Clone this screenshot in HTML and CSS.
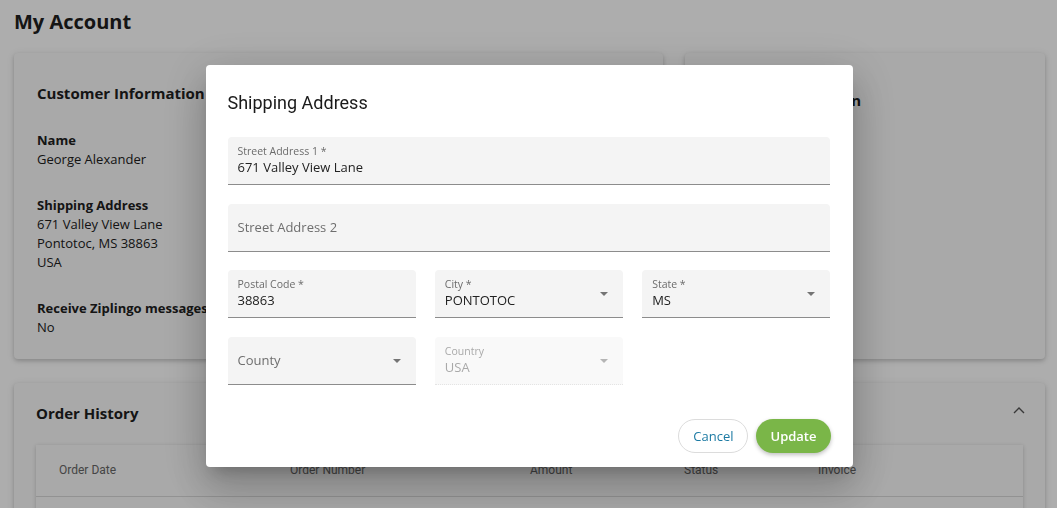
FILE: index.html
```html
<!DOCTYPE html>
<html lang="en">
<head>
    <meta charset="UTF-8">
    <meta name="viewport" content="width=device-width, initial-scale=1.0">
    <title>My Account</title>
    <link rel="stylesheet" href="styles.css">
</head>
<body>

    <div class="page">
        <h1 class="page-title">My Account</h1>

        <div class="info-row">
            <div class="card">
                <h2 class="card-title">Customer Information</h2>
                <div class="info-block">
                    <div class="info-label">Name</div>
                    <div>George Alexander</div>
                </div>
                <div class="info-block">
                    <div class="info-label">Shipping Address</div>
                    <div>671 Valley View Lane</div>
                    <div>Pontotoc, MS 38863</div>
                    <div>USA</div>
                </div>
                <div class="info-block">
                    <div class="info-label">Receive Ziplingo messages</div>
                    <div>No</div>
                </div>
            </div>
            <div class="card card-right">
                <h2 class="card-title">Contact Information</h2>
            </div>
        </div>

        <div class="card history">
            <div class="history-head">
                <h2 class="card-title">Order History</h2>
                <svg class="chevron" width="12" height="8" viewBox="0 0 12 8">
                    <path d="M1 7 L6 2 L11 7" fill="none" stroke="currentColor" stroke-width="1.4"/>
                </svg>
            </div>
            <div class="orders">
                <div class="orders-head">
                    <div>Order Date</div>
                    <div>Order Number</div>
                    <div>Amount</div>
                    <div>Status</div>
                    <div>Invoice</div>
                </div>
                <div class="orders-row"></div>
            </div>
        </div>
    </div>

    <!-- dialog over the page -->
    <div class="overlay">
        <div class="dialog">
            <h2 class="dialog-title">Shipping Address</h2>

            <div class="form">
                <div class="field wide">
                    <span class="field-label">Street Address 1 *</span>
                    <span class="field-value">671 Valley View Lane</span>
                </div>
                <div class="field wide empty">
                    <span class="field-placeholder">Street Address 2</span>
                </div>

                <div class="field">
                    <span class="field-label">Postal Code *</span>
                    <span class="field-value">38863</span>
                </div>
                <div class="field select">
                    <span class="field-label">City *</span>
                    <span class="field-value">PONTOTOC</span>
                    <span class="arrow"></span>
                </div>
                <div class="field select">
                    <span class="field-label">State *</span>
                    <span class="field-value">MS</span>
                    <span class="arrow"></span>
                </div>

                <div class="field select empty">
                    <span class="field-placeholder">County</span>
                    <span class="arrow"></span>
                </div>
                <div class="field select disabled">
                    <span class="field-label">Country</span>
                    <span class="field-value">USA</span>
                    <span class="arrow"></span>
                </div>
            </div>

            <div class="actions">
                <button class="btn btn-cancel">Cancel</button>
                <button class="btn btn-update">Update</button>
            </div>
        </div>
    </div>

</body>
</html>
```

FILE: styles.css
```css
body {
    font-family: 'Open Sans', 'Liberation Sans', sans-serif;
    margin: 0;
    padding: 0;
    background-color: #ffffff;
    color: #202020;
    font-size: 13px;
    overflow: hidden;
}
.page {
    padding: 9px 12px 0 14px;
}
.page-title {
    font-size: 20px;
    line-height: 26px;
    font-weight: 700;
    margin: 0 0 18px;
}
.info-row {
    display: grid;
    grid-template-columns: 649px 1fr;
    gap: 22px;
}
.card {
    background: #f9f9f9;
    border-radius: 4px;
    box-shadow: 0 2px 4px rgba(0, 0, 0, 0.18), 0 1px 8px rgba(0, 0, 0, 0.08);
    padding: 30px 23px 22px;
    line-height: 19px;
}
.card-right {
    padding-top: 37px;
}
.card-title {
    font-size: 15px;
    line-height: 20px;
    font-weight: 700;
    margin: 0 0 28px;
}
.info-block {
    margin-bottom: 27px;
}
.info-block:last-child {
    margin-bottom: 0;
}
.info-label {
    font-weight: 700;
}

.history {
    margin-top: 24px;
    padding: 20px 22px 0;
}
.history-head {
    display: flex;
    justify-content: space-between;
    align-items: center;
}
.history-head .card-title {
    margin: 0;
}
.chevron {
    color: #555;
    margin-right: -2px;
    margin-top: -6px;
}
.orders {
    margin-top: 22px;
    background: #f9f9f9;
    box-shadow: 0 1px 4px rgba(0, 0, 0, 0.2);
}
.orders-head {
    display: grid;
    grid-template-columns: 231px 240px 154px 134px 1fr;
    padding: 0 23px;
    height: 51px;
    align-items: center;
    font-family: Roboto, 'Liberation Sans', sans-serif;
    font-size: 12px;
    color: #666;
    border-bottom: 1px solid #d8d8d8;
}
.orders-row {
    height: 40px;
}

/* dialog */
.overlay {
    position: fixed;
    inset: 0;
    background: rgba(0, 0, 0, 0.32);
    display: flex;
    justify-content: center;
    align-items: flex-start;
    padding-top: 65px;
}
.dialog {
    width: 603px;
    background: #fff;
    border-radius: 4px;
    padding: 26px 22px 14px;
    box-shadow: 0 11px 15px -7px rgba(0, 0, 0, 0.2), 0 24px 38px 3px rgba(0, 0, 0, 0.14), 0 9px 46px 8px rgba(0, 0, 0, 0.12);
    margin-left: 1px;
}
.dialog-title {
    font-family: Roboto, 'Liberation Sans', sans-serif;
    font-size: 18px;
    line-height: 24px;
    font-weight: 400;
    color: #1a1a1a;
    margin: 0 0 22px;
}
.form {
    display: grid;
    grid-template-columns: repeat(3, 1fr);
    column-gap: 19px;
    row-gap: 18.5px;
}
.field {
    position: relative;
    height: 48px;
    box-sizing: border-box;
    background: #f4f4f4;
    border-radius: 4px 4px 0 0;
    border-bottom: 1px solid #8c8c8c;
    padding: 7px 10px 0;
    display: flex;
    flex-direction: column;
}
.field.wide {
    grid-column: 1 / -1;
}
.field-label {
    font-size: 10.5px;
    line-height: 14px;
    color: #6b6b6b;
}
.field-value {
    font-size: 13px;
    line-height: 19px;
    color: #222;
}
.field.empty {
    justify-content: center;
    padding-top: 0;
}
.field-placeholder {
    font-size: 13px;
    color: #6e6e6e;
}
.field.disabled {
    background: #f9f9f9;
    border-bottom: 1px dotted #e4e4e4;
}
.field.disabled .field-label,
.field.disabled .field-value {
    color: #a9a9a9;
}
.arrow {
    position: absolute;
    right: 15px;
    top: 22px;
    width: 0;
    height: 0;
    border-left: 4px solid transparent;
    border-right: 4px solid transparent;
    border-top: 4px solid #747474;
}
.field.disabled .arrow {
    border-top-color: #b5b5b5;
}

.actions {
    display: flex;
    justify-content: flex-end;
    gap: 8px;
    margin-top: 34px;
}
.btn {
    font-family: 'Open Sans', 'Liberation Sans', sans-serif;
    font-size: 13px;
    height: 34px;
    border-radius: 17px;
    padding: 0 14px;
    cursor: pointer;
}
.btn-cancel {
    background: #fff;
    border: 1px solid #dcdcdc;
    color: #1c7aa3;
}
.btn-update {
    background: #7ab648;
    border: none;
    color: #fff;
    font-weight: 600;
    box-shadow: 0 2px 4px rgba(0, 0, 0, 0.25);
}
```
